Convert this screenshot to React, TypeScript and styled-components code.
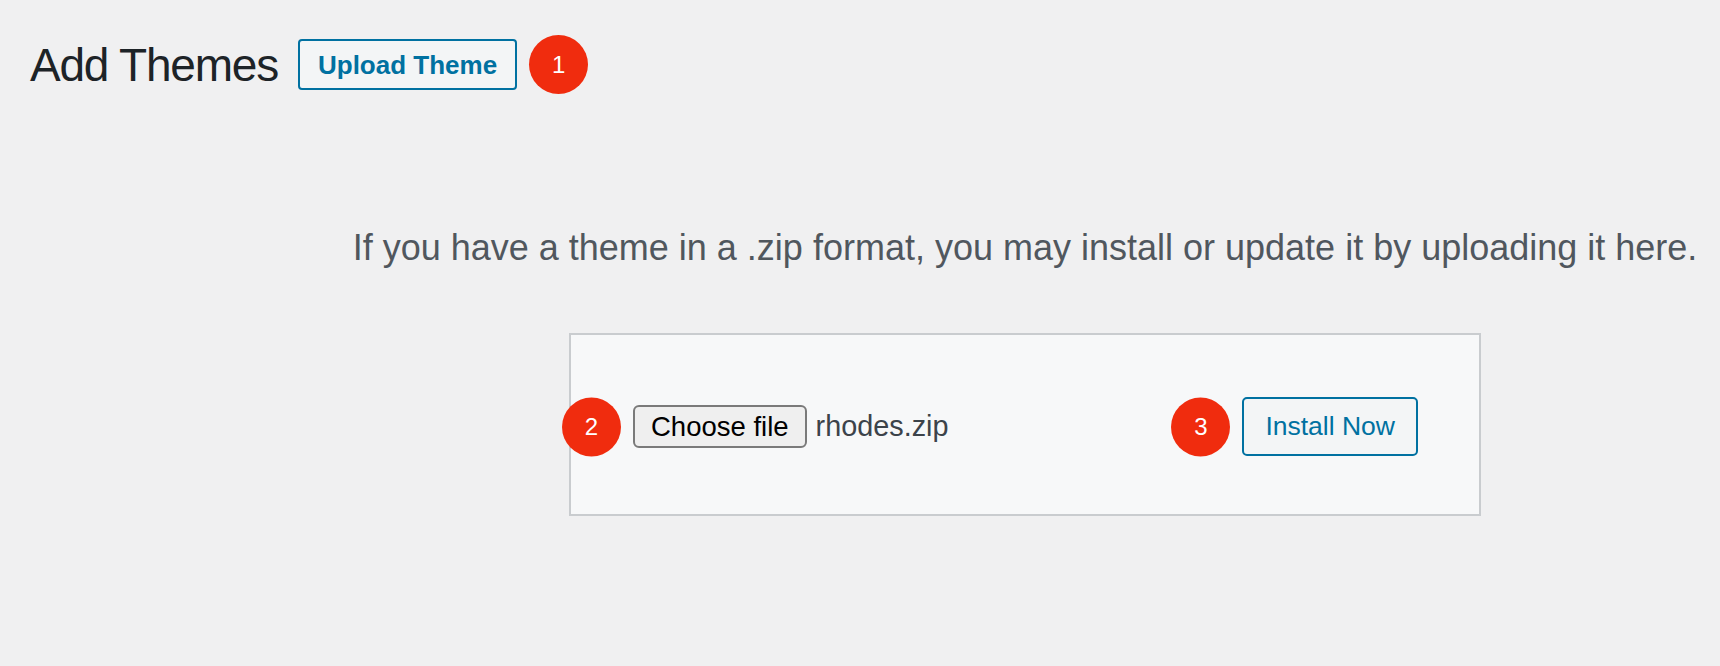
import styled, { createGlobalStyle } from "styled-components";

const GlobalStyle = createGlobalStyle`
  html,
  body {
    margin: 0;
    padding: 0;
    background: #f0f0f1;
  }

  body {
    font-family: "Liberation Sans", Arial, sans-serif;
  }
`;

const Page = styled.div`
  min-height: 666px;
  box-sizing: border-box;
  padding-top: 35px;
  background: #f0f0f1;
`;

const Header = styled.div`
  display: flex;
  align-items: center;
  padding-left: 30px;
`;

const Title = styled.h1`
  margin: 0 20px 0 0;
  font-size: 46px;
  font-weight: 400;
  line-height: 1;
  letter-spacing: -1.2px;
  color: #1d2327;
`;

const OutlineButton = styled.button<{ $height: number; $size: number; $bold?: boolean; $pad: number; $radius: number }>`
  display: inline-flex;
  align-items: center;
  justify-content: center;
  box-sizing: border-box;
  height: ${(props) => props.$height}px;
  padding: 0 ${(props) => props.$pad}px;
  border: 2px solid #0071a1;
  border-radius: ${(props) => props.$radius}px;
  background: #f3f5f6;
  color: #0071a1;
  font-family: "Liberation Sans", Arial, sans-serif;
  font-size: ${(props) => props.$size}px;
  font-weight: ${(props) => (props.$bold ? 700 : 400)};
  line-height: 1;
  white-space: nowrap;
  cursor: pointer;
`;

const Badge = styled.span<{ $overlay?: boolean }>`
  display: flex;
  align-items: center;
  justify-content: center;
  flex: none;
  width: 59px;
  height: 59px;
  border-radius: 50%;
  background: #f02c0e;
  color: #ffffff;
  font-size: 24px;
  line-height: 1;
  margin-left: ${(props) => (props.$overlay ? "0" : "12px")};
  ${(props) =>
    props.$overlay &&
    `
    position: absolute;
    top: 50%;
    right: calc(100% + 12px);
    transform: translateY(-50%);
  `}
`;

const UploadSection = styled.section`
  margin-top: 136px;
  padding-left: 330px;
  text-align: center;
`;

const Intro = styled.p`
  margin: 0;
  font-size: 36px;
  line-height: 36px;
  color: #50575e;
  white-space: nowrap;
`;

const UploadForm = styled.form`
  display: flex;
  align-items: center;
  justify-content: space-between;
  box-sizing: border-box;
  width: 912px;
  margin: 67px auto 0;
  padding: 62px 61px 58px 62px;
  border: 2px solid #c9cccf;
  background: #f7f8f9;
`;

const Group = styled.div`
  position: relative;
  display: flex;
  align-items: center;
  gap: 9px;
`;

const FileButton = styled.button`
  display: inline-flex;
  align-items: center;
  box-sizing: border-box;
  height: 43px;
  padding: 0 16px;
  border: 2px solid #7a7a7a;
  border-radius: 6px;
  background: #efefef;
  color: #000000;
  font-family: "Liberation Sans", Arial, sans-serif;
  font-size: 27.5px;
  line-height: 1;
  cursor: pointer;
`;

const FileName = styled.span`
  font-size: 28.8px;
  line-height: 1;
  color: #3c434a;
`;

const App = () => {
  return (
    <>
      <GlobalStyle />
      <Page>
        <Header>
          <Title>Add Themes</Title>
          <OutlineButton type="button" $height={51} $size={26} $bold $pad={18} $radius={4}>
            Upload Theme
          </OutlineButton>
          <Badge>1</Badge>
        </Header>

        <UploadSection>
          <Intro>
            If you have a theme in a .zip format, you may install or update it by uploading it here.
          </Intro>

          <UploadForm onSubmit={(e) => e.preventDefault()}>
            <Group>
              <Badge $overlay>2</Badge>
              <FileButton type="button">Choose file</FileButton>
              <FileName>rhodes.zip</FileName>
            </Group>
            <Group>
              <Badge $overlay>3</Badge>
              <OutlineButton type="submit" $height={59} $size={26.5} $pad={21} $radius={5}>
                Install Now
              </OutlineButton>
            </Group>
          </UploadForm>
        </UploadSection>
      </Page>
    </>
  );
};

export default App;
